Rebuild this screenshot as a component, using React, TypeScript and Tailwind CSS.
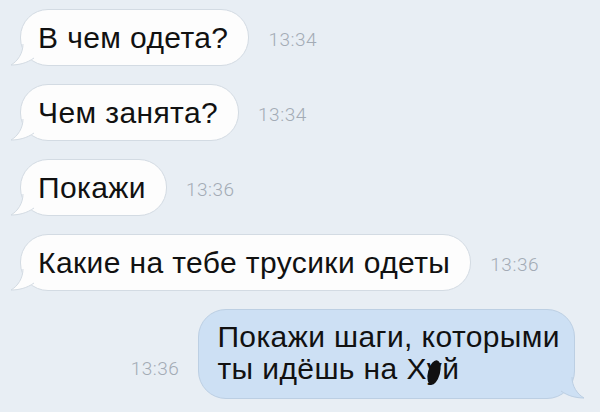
import React from 'react';

type Msg = { text: string[]; time: string; out?: boolean };

const MESSAGES: Msg[] = [
  { text: ['В чем одета?'], time: '13:34' },
  { text: ['Чем занята?'], time: '13:34' },
  { text: ['Покажи'], time: '13:36' },
  { text: ['Какие на тебе трусики одеты'], time: '13:36' },
  { text: ['Покажи шаги, которыми', 'ты идёшь на Х'], time: '13:36', out: true },
];

const TailIn = () => (
  <svg className="absolute -left-[11px] -bottom-[1px]" width="26" height="22" viewBox="0 0 26 22">
    <path d="M13 0 C13 9 8 17 1 21 C9 21 17 19 24 14 L24 0 Z" fill="#fdfdfd" />
    <path d="M13 0 C13 9 8 17 1 21 C9 21 17 19 24 14" fill="none" stroke="#d3dbe3" strokeWidth="1" />
  </svg>
);

const TailOut = () => (
  <svg className="absolute -right-[11px] -bottom-[1px]" width="26" height="22" viewBox="0 0 26 22">
    <path d="M13 0 C13 9 18 17 25 21 C17 21 9 19 2 14 L2 0 Z" fill="#cde0f4" />
    <path d="M13 0 C13 9 18 17 25 21 C17 21 9 19 2 14" fill="none" stroke="#bccfe3" strokeWidth="1" />
  </svg>
);

const Time = ({ t }: { t: string }) => (
  <span className="text-[19px] font-light text-[#a3abb5] tracking-[0.5px] font-['Roboto',sans-serif]">{t}</span>
);

export default function App() {
  return (
    <div className="w-[600px] h-[412px] overflow-hidden bg-[#e8eef4] font-['Liberation_Sans',Arial,sans-serif] pt-[9px] pl-[20px] pr-[25px] flex flex-col gap-[18px]">
      {MESSAGES.map((m, i) =>
        m.out ? (
          <div key={i} className="flex items-end justify-end gap-[19px]">
            <div className="mb-[16px]"><Time t={m.time} /></div>
            <div className="relative bg-[#cde0f4] border border-[#bccfe3] rounded-[28px] pl-[18px] pr-[14px] pt-[11px] pb-[13px] text-[30px] leading-[32px] tracking-[0.4px] text-[#111]">
              <TailOut />
              <div className="relative">{m.text[0]}</div>
              <div className="relative">
                {m.text[1]}
                <span className="relative inline-block">
                  у
                  <span className="absolute left-[1px] top-[7px] w-[12px] h-[25px] bg-[#111] rounded-[50%] rotate-[15deg]" />
                </span>
                й
              </div>
            </div>
          </div>
        ) : (
          <div key={i} className="flex items-center gap-[19px]">
            <div className="relative h-[57px] bg-[#fdfdfd] border border-[#d3dbe3] rounded-[28px] pl-[17px] pr-[20px] flex items-center text-[30px] tracking-[0.4px] text-[#111]">
              <TailIn />
              <span className="relative">{m.text[0]}</span>
            </div>
            <div className="mt-[6px]"><Time t={m.time} /></div>
          </div>
        )
      )}
    </div>
  );
}
